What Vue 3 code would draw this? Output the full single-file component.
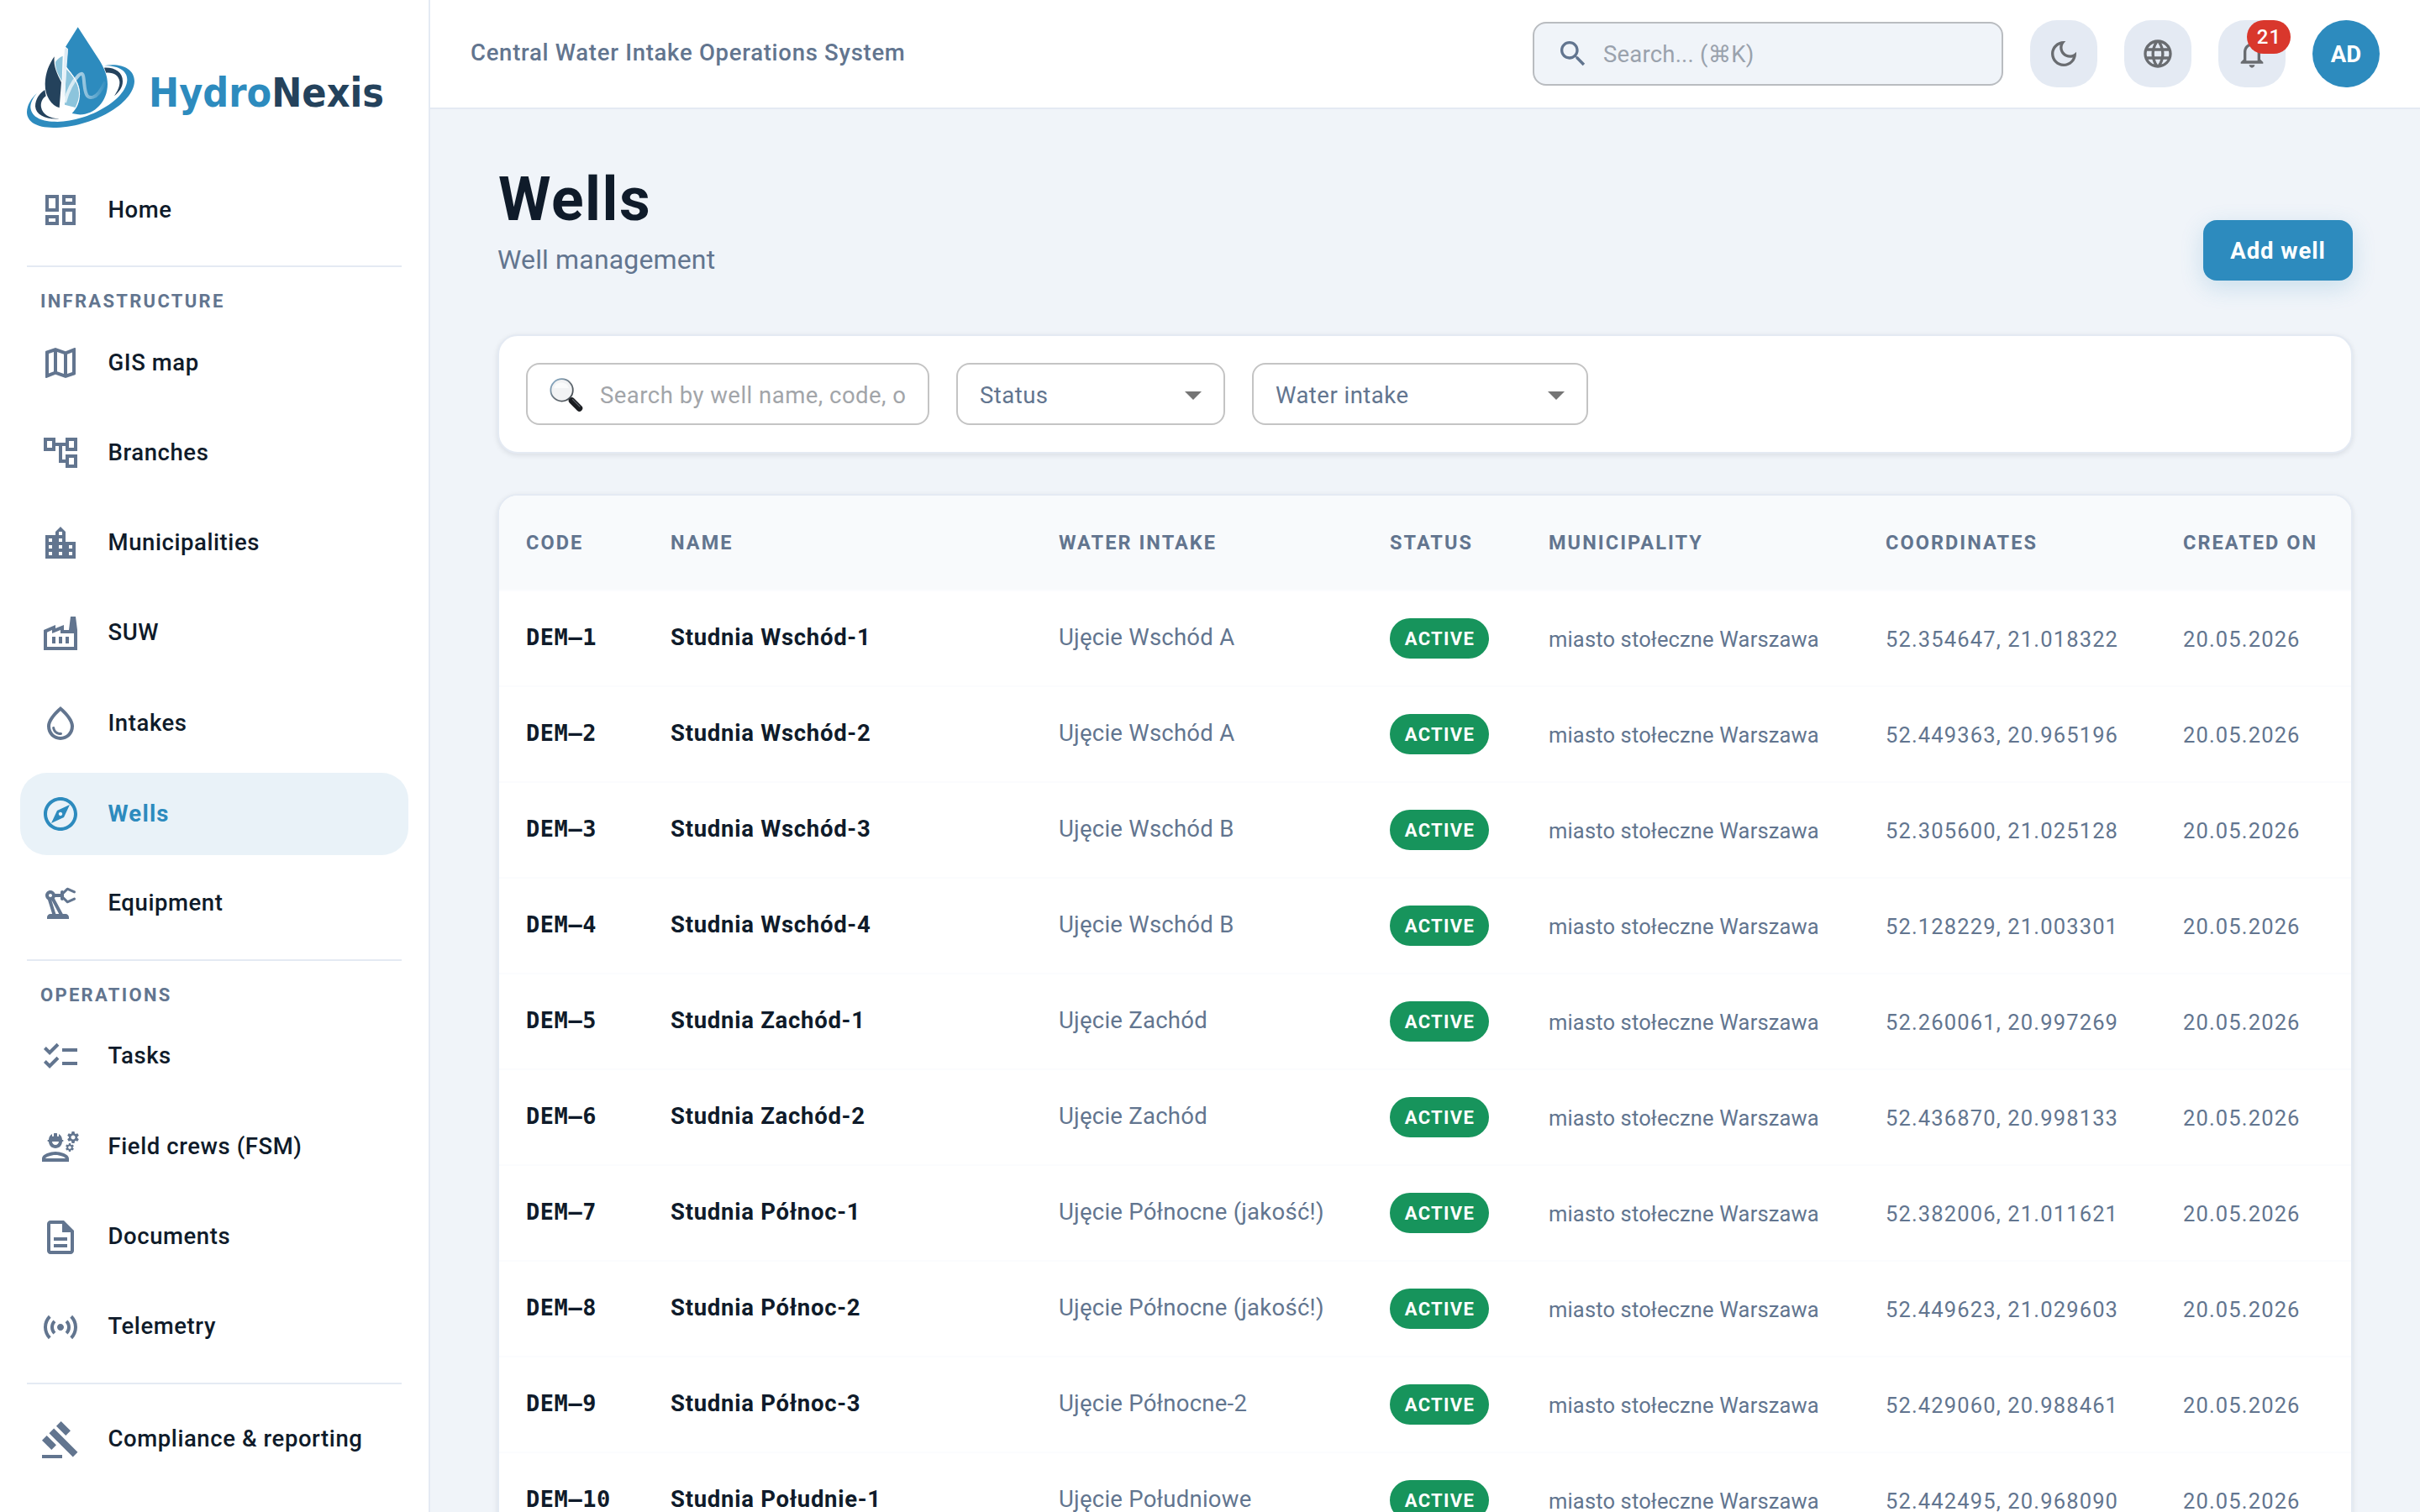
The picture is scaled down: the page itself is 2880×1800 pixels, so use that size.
<script setup>
import { ref } from 'vue'

const icons = {
  home: 'M19 5v2h-4V5h4M9 5v6H5V5h4m10 8v6h-4v-6h4M9 17v2H5v-2h4M21 3h-8v6h8V3zM11 3H3v10h8V3zm10 8h-8v10h8V11zm-10 4H3v6h8v-6z',
  map: 'm20.5 3-.16.03L15 5.1 9 3 3.36 4.9c-.21.07-.36.25-.36.48V20.5c0 .28.22.5.5.5l.16-.03L9 18.9l6 2.1 5.64-1.9c.21-.07.36-.25.36-.48V3.5c0-.28-.22-.5-.5-.5M10 5.47l4 1.4v11.66l-4-1.4zm-5 .99 3-1.01v11.7l-3 1.16zm14 11.08-3 1.01V6.86l3-1.16z',
  tree: 'M22 11V3h-7v3H9V3H2v8h7V8h2v10h4v3h7v-8h-7v3h-2V8h2v3zM7 9H4V5h3zm10 6h3v4h-3zm0-10h3v4h-3z',
  city: 'M15 11V5l-3-3-3 3v2H3v14h18V11zm-8 8H5v-2h2zm0-4H5v-2h2zm0-4H5V9h2zm6 8h-2v-2h2zm0-4h-2v-2h2zm0-4h-2V9h2zm0-4h-2V5h2zm6 12h-2v-2h2zm0-4h-2v-2h2z',
  factory: 'M22 22H2V10l7-3v2l5-2v3h3l1-8h3l1 8zM12 9.95l-5 2V10l-3 1.32V20h16v-8h-8zM11 18h2v-4h-2zm-4 0h2v-4H7zm10-4h-2v4h2z',
  drop: 'M12 2c-5.33 4.55-8 8.48-8 11.8 0 4.98 3.8 8.2 8 8.2s8-3.22 8-8.2c0-3.32-2.67-7.25-8-11.8m0 18c-3.35 0-6-2.57-6-6.2 0-2.34 1.95-5.44 6-9.14 4.05 3.7 6 6.79 6 9.14 0 3.63-2.65 6.2-6 6.2m-4.17-6c.37 0 .67.26.74.62.41 2.22 2.28 2.98 3.64 2.87.43-.02.79.32.79.75 0 .4-.32.73-.72.75-2.13.13-4.62-1.09-5.19-4.12-.08-.45.28-.87.74-.87',
  explore: 'M12 2C6.48 2 2 6.48 2 12s4.48 10 10 10 10-4.48 10-10S17.52 2 12 2m0 18c-4.41 0-8-3.59-8-8s3.59-8 8-8 8 3.59 8 8-3.59 8-8 8m-5.5-2.5 7.51-3.49L17.5 6.5 9.99 9.99zm5.5-6.6c.61 0 1.1.49 1.1 1.1s-.49 1.1-1.1 1.1-1.1-.49-1.1-1.1.49-1.1 1.1-1.1',
  arm: 'm19.93 8.35-3.6 1.68L14 7.7V6.3l2.33-2.33 3.6 1.68c.38.18.82.01 1-.36.18-.38.01-.82-.36-1l-3.92-1.83c-.38-.18-.83-.1-1.13.2L13.78 4.4c-.18-.24-.46-.4-.78-.4-.55 0-1 .45-1 1v1H8.82C8.4 4.84 7.3 4 6 4 4.34 4 3 5.34 3 7c0 1.1.6 2.05 1.48 2.58L7.08 18H6c-1.1 0-2 .9-2 2v1h13v-1c0-1.1-.9-2-2-2h-1.62L8.41 8.77c.17-.24.31-.49.41-.77H12v1c0 .55.45 1 1 1 .32 0 .6-.16.78-.4l1.74 1.74c.3.3.75.38 1.13.2l3.92-1.83c.38-.18.54-.62.36-1-.18-.37-.62-.54-1-.36M6 8c-.55 0-1-.45-1-1s.45-1 1-1 1 .45 1 1-.45 1-1 1m5.11 10H9.17l-2.46-8h.1z',
  checklist: 'M22 7h-9v2h9zm0 8h-9v2h9zM5.54 11 2 7.46l1.41-1.41 2.12 2.12 4.24-4.24 1.41 1.41zm0 8L2 15.46l1.41-1.41 2.12 2.12 4.24-4.24 1.41 1.41z',
  crew: 'M9 15c-2.67 0-8 1.34-8 4v2h16v-2c0-2.66-5.33-4-8-4m-6 4c.22-.72 3.31-2 6-2 2.7 0 5.8 1.29 6 2zM4.74 9H5c0 2.21 1.79 4 4 4s4-1.79 4-4h.26c.27 0 .49-.22.49-.49v-.02c0-.27-.22-.49-.49-.49H13c0-1.48-.81-2.75-2-3.45v.95c0 .28-.22.5-.5.5s-.5-.22-.5-.5V4.14C9.68 4.06 9.35 4 9 4s-.68.06-1 .14V5.5c0 .28-.22.5-.5.5S7 5.78 7 5.5v-.95C5.81 5.25 5 6.52 5 8h-.26c-.27 0-.49.22-.49.49v.03c0 .26.22.48.49.48M11 9c0 1.1-.9 2-2 2s-2-.9-2-2zm10.98-2.77.93-.83-.75-1.3-1.19.39c-.14-.11-.3-.2-.47-.27L20.25 3h-1.5l-.25 1.22c-.17.07-.33.16-.48.27l-1.18-.39-.75 1.3.93.83c-.02.17-.02.35 0 .52l-.93.85.75 1.3 1.2-.38c.13.1.28.18.43.25l.28 1.23h1.5l.27-1.22c.16-.07.3-.15.44-.25l1.19.38.75-1.3-.93-.85c.03-.19.02-.36.01-.53M19.5 7.75c-.69 0-1.25-.56-1.25-1.25s.56-1.25 1.25-1.25 1.25.56 1.25 1.25-.56 1.25-1.25 1.25m-.1 3.04-.85.28c-.1-.08-.21-.14-.33-.19l-.18-.88h-1.07l-.18.87c-.12.05-.24.12-.34.19l-.84-.28-.54.93.66.59c-.01.13-.01.25 0 .37l-.66.61.54.93.86-.27c.1.07.2.13.31.18l.18.88h1.07l.19-.87c.11-.05.22-.11.32-.18l.85.27.54-.93-.66-.61c.01-.13.01-.25 0-.37l.66-.59zm-1.9 2.6c-.49 0-.89-.4-.89-.89s.4-.89.89-.89.89.4.89.89-.4.89-.89.89',
  doc: 'M8 16h8v2H8zm0-4h8v2H8zm6-10H6c-1.1 0-2 .9-2 2v16c0 1.1.89 2 1.99 2H18c1.1 0 2-.9 2-2V8zm4 18H6V4h7v5h5z',
  sensors: 'M7.76 16.24C6.67 15.16 6 13.66 6 12s.67-3.16 1.76-4.24l1.42 1.42C8.45 9.9 8 10.9 8 12s.45 2.1 1.17 2.83zm8.48 0C17.33 15.16 18 13.66 18 12s-.67-3.16-1.76-4.24l-1.42 1.42C15.55 9.9 16 10.9 16 12s-.45 2.1-1.17 2.83zM12 10c-1.1 0-2 .9-2 2s.9 2 2 2 2-.9 2-2-.9-2-2-2m8 2c0 2.21-.9 4.21-2.35 5.65l1.42 1.42C20.88 17.26 22 14.76 22 12s-1.12-5.26-2.93-7.07l-1.42 1.42C19.1 7.79 20 9.79 20 12M6.35 6.35 4.93 4.93C3.12 6.74 2 9.24 2 12s1.12 5.26 2.93 7.07l1.42-1.42C4.9 16.21 4 14.21 4 12s.9-4.21 2.35-5.65',
  gavel: 'M1 21h12v2H1zM5.245 8.07l2.83-2.827 14.14 14.142-2.828 2.828zM12.317 1l5.657 5.656-2.83 2.83-5.654-5.66zM3.825 9.485l5.657 5.657-2.828 2.828-5.657-5.657z',
  search: 'M15.5 14h-.79l-.28-.27C15.41 12.59 16 11.11 16 9.5 16 5.91 13.09 3 9.5 3S3 5.91 3 9.5 5.91 16 9.5 16c1.61 0 3.09-.59 4.23-1.57l.27.28v.79l5 4.99L20.49 19zm-6 0C7.01 14 5 11.99 5 9.5S7.01 5 9.5 5 14 7.01 14 9.5 11.99 14 9.5 14',
  moon: 'M9.37 5.51c-.18.64-.27 1.31-.27 1.99 0 4.08 3.32 7.4 7.4 7.4.68 0 1.35-.09 1.99-.27C17.45 17.19 14.93 19 12 19c-3.86 0-7-3.14-7-7 0-2.93 1.81-5.45 4.37-6.49M12 3c-4.97 0-9 4.03-9 9s4.03 9 9 9 9-4.03 9-9c0-.46-.04-.92-.1-1.36-.98 1.37-2.58 2.26-4.4 2.26-2.98 0-5.4-2.42-5.4-5.4 0-1.81.89-3.42 2.26-4.4-.44-.06-.9-.1-1.36-.1',
  globe: 'M11.99 2C6.47 2 2 6.48 2 12s4.47 10 9.99 10C17.52 22 22 17.52 22 12S17.52 2 11.99 2m6.93 6h-2.95c-.32-1.25-.78-2.45-1.38-3.56 1.84.63 3.37 1.91 4.33 3.56M12 4.04c.83 1.2 1.48 2.53 1.91 3.96h-3.82c.43-1.43 1.08-2.76 1.91-3.96M4.26 14C4.1 13.36 4 12.69 4 12s.1-1.36.26-2h3.38c-.08.66-.14 1.32-.14 2s.06 1.34.14 2zm.82 2h2.95c.32 1.25.78 2.45 1.38 3.56-1.84-.63-3.37-1.9-4.33-3.56m2.95-8H5.08c.96-1.66 2.49-2.93 4.33-3.56C8.81 5.55 8.35 6.75 8.03 8M12 19.96c-.83-1.2-1.48-2.53-1.91-3.96h3.82c-.43 1.43-1.08 2.76-1.91 3.96M14.34 14H9.66c-.09-.66-.16-1.32-.16-2s.07-1.35.16-2h4.68c.09.65.16 1.32.16 2s-.07 1.34-.16 2m.25 5.56c.6-1.11 1.06-2.31 1.38-3.56h2.95c-.96 1.65-2.49 2.93-4.33 3.56M16.36 14c.08-.66.14-1.32.14-2s-.06-1.34-.14-2h3.38c.16.64.26 1.31.26 2s-.1 1.36-.26 2z',
  bell: 'M12 22c1.1 0 2-.9 2-2h-4c0 1.1.9 2 2 2m6-6v-5c0-3.07-1.63-5.64-4.5-6.32V4c0-.83-.67-1.5-1.5-1.5s-1.5.67-1.5 1.5v.68C7.64 5.36 6 7.92 6 11v5l-2 2v1h16v-1zm-2 1H8v-6c0-2.48 1.51-4.5 4-4.5s4 2.02 4 4.5z',
}

const active = ref('Wells')

const groups = [
  { items: [{ label: 'Home', icon: 'home' }] },
  {
    title: 'Infrastructure',
    items: [
      { label: 'GIS map', icon: 'map' },
      { label: 'Branches', icon: 'tree' },
      { label: 'Municipalities', icon: 'city' },
      { label: 'SUW', icon: 'factory' },
      { label: 'Intakes', icon: 'drop' },
      { label: 'Wells', icon: 'explore' },
      { label: 'Equipment', icon: 'arm' },
    ],
  },
  {
    title: 'Operations',
    items: [
      { label: 'Tasks', icon: 'checklist' },
      { label: 'Field crews (FSM)', icon: 'crew' },
      { label: 'Documents', icon: 'doc' },
      { label: 'Telemetry', icon: 'sensors' },
    ],
  },
  { items: [{ label: 'Compliance & reporting', icon: 'gavel' }] },
]

const columns = ['Code', 'Name', 'Water intake', 'Status', 'Municipality', 'Coordinates', 'Created on']

const city = 'miasto stołeczne Warszawa'
const created = '20.05.2026'
const wells = [
  { code: 'DEM–1', name: 'Studnia Wschód-1', intake: 'Ujęcie Wschód A', coords: '52.354647, 21.018322' },
  { code: 'DEM–2', name: 'Studnia Wschód-2', intake: 'Ujęcie Wschód A', coords: '52.449363, 20.965196' },
  { code: 'DEM–3', name: 'Studnia Wschód-3', intake: 'Ujęcie Wschód B', coords: '52.305600, 21.025128' },
  { code: 'DEM–4', name: 'Studnia Wschód-4', intake: 'Ujęcie Wschód B', coords: '52.128229, 21.003301' },
  { code: 'DEM–5', name: 'Studnia Zachód-1', intake: 'Ujęcie Zachód', coords: '52.260061, 20.997269' },
  { code: 'DEM–6', name: 'Studnia Zachód-2', intake: 'Ujęcie Zachód', coords: '52.436870, 20.998133' },
  { code: 'DEM–7', name: 'Studnia Północ-1', intake: 'Ujęcie Północne (jakość!)', coords: '52.382006, 21.011621' },
  { code: 'DEM–8', name: 'Studnia Północ-2', intake: 'Ujęcie Północne (jakość!)', coords: '52.449623, 21.029603' },
  { code: 'DEM–9', name: 'Studnia Północ-3', intake: 'Ujęcie Północne-2', coords: '52.429060, 20.988461' },
  { code: 'DEM–10', name: 'Studnia Południe-1', intake: 'Ujęcie Południowe', coords: '52.442495, 20.968090' },
]
</script>

<template>
  <div class="app">
    <aside class="sidebar">
      <div class="brand">
        <svg class="brand-mark" viewBox="96 96 384 360">
          <defs>
            <linearGradient id="stem" x1="0" y1="0" x2="0" y2="1">
              <stop offset="0" stop-color="#dceaf4" />
              <stop offset=".6" stop-color="#eaf3f9" />
              <stop offset="1" stop-color="#fff" />
            </linearGradient>
            <linearGradient id="wave" gradientUnits="userSpaceOnUse" x1="230" y1="0" x2="382" y2="0">
              <stop offset="0" stop-color="#fff" stop-opacity=".75" />
              <stop offset=".4" stop-color="#fff" stop-opacity=".55" />
              <stop offset=".6" stop-color="#fff" stop-opacity=".38" />
              <stop offset="1" stop-color="#fff" stop-opacity="0" />
            </linearGradient>
          </defs>
          <path fill="#2d8bbe" d="M372 235C430 224 480 245 480 290C478 370 330 455 190 456C130 456 96 435 96 400C97 375 112 350 132 333C118 348 108 368 109 385C113 420 150 435 205 435C320 432 452 355 454 285C455 252 420 233 372 235Z" />
          <path fill="#24425c" d="M372 242C410 240 438 258 438 290C438 312 425 328 408 343C420 325 428 308 427 292C425 270 405 258 379 260Z" />
          <path fill="#24425c" d="M160 321L164 343C148 354 145 370 147 383C152 408 175 422 212 424C165 428 128 410 126 380C126 355 140 334 160 321Z" />
          <path fill="#24425c" d="M194 202C191 240 203 262 219 294L212 385C185 377 160 345 161 300C162 260 175 230 194 202Z" />
          <path fill="#8cc4dc" d="M198 221C206 210 215 203 224 200L221 290C205 262 197 242 198 221ZM236 245C254 266 280 292 282 332C283 350 277 366 269 384L231 374Z" />
          <path fill="#2d8bbe" d="M278 97L355 215C372 243 384 270 384 300C384 365 335 412 280 409L257 405C275 385 285 365 285 335C283 295 262 270 236 238L243 175L234 167Z" />
          <path fill="url(#stem)" d="M231 174Q237 168 243 176L237 260L228 384L214 386L222 300Z" />
          <path fill="none" stroke="url(#wave)" stroke-width="12" d="M231 366C242 325 262 288 280 270C300 252 298 275 301 300C305 340 312 352 332 347C350 342 364 318 376 292" />
          <path fill="none" stroke="#fff" stroke-width="2.5" d="M236 240C262 272 285 297 284 338" />
        </svg>
        <span class="brand-name"><span class="brand-hydro">Hydro</span>Nexis</span>
      </div>

      <nav>
        <section v-for="(g, gi) in groups" :key="gi" class="nav-group">
          <div v-if="g.title" class="nav-title">{{ g.title }}</div>
          <a
            v-for="item in g.items"
            :key="item.label"
            class="nav-item"
            :class="{ 'is-active': item.label === active }"
            @click="active = item.label"
          >
            <svg class="nav-icon" viewBox="0 0 24 24"><path :d="icons[item.icon]" /></svg>
            <span class="nav-label">{{ item.label }}</span>
          </a>
        </section>
      </nav>
    </aside>

    <div class="page">
      <header class="topbar">
        <span class="topbar-title">Central Water Intake Operations System</span>
        <div class="topbar-search">
          <svg class="ico" viewBox="0 0 24 24"><path :d="icons.search" /></svg>
          <span>Search... (⌘K)</span>
        </div>
        <button class="icon-btn"><svg class="ico" viewBox="0 0 24 24"><path :d="icons.moon" /></svg></button>
        <button class="icon-btn"><svg class="ico" viewBox="0 0 24 24"><path :d="icons.globe" /></svg></button>
        <button class="icon-btn">
          <svg class="ico" viewBox="0 0 24 24"><path :d="icons.bell" /></svg>
          <span class="count">21</span>
        </button>
        <div class="avatar">AD</div>
      </header>

      <main class="content">
        <div class="page-head">
          <div>
            <h1 class="page-title">Wells</h1>
            <p class="page-sub">Well management</p>
          </div>
          <button class="add-btn">Add well</button>
        </div>

        <div class="card filters">
          <div class="field field-search">
            <svg class="lens" viewBox="0 0 40 40">
              <defs>
                <linearGradient id="rim" x1="0" y1="0" x2="1" y2="1">
                  <stop offset="0" stop-color="#8fb8d6" />
                  <stop offset=".5" stop-color="#6a747c" />
                  <stop offset="1" stop-color="#3a3f44" />
                </linearGradient>
              </defs>
              <path d="M22.5 23.5l3.5 3.5" stroke="#777" stroke-width="3" />
              <path d="M26.5 27l9 9" stroke="#1b1d21" stroke-width="7.5" stroke-linecap="round" />
              <path d="M27.5 25.5l8.5 8.5" stroke="#5a5e66" stroke-width="1.2" stroke-linecap="round" />
              <circle cx="14.6" cy="14.4" r="13.2" fill="#f2f3f4" stroke="url(#rim)" stroke-width="1.8" />
              <path d="M5 12a9.5 9.5 0 0 1 18 0" fill="#fafbfb" />
            </svg>
            <span class="placeholder">Search by well name, code, o</span>
          </div>
          <div class="field field-status">
            <span>Status</span>
            <svg class="caret" viewBox="0 0 24 24"><path d="m7 10 5 5 5-5z" /></svg>
          </div>
          <div class="field field-intake">
            <span>Water intake</span>
            <svg class="caret" viewBox="0 0 24 24"><path d="m7 10 5 5 5-5z" /></svg>
          </div>
        </div>

        <div class="card table-card">
          <table class="wells">
            <colgroup>
              <col class="c-code"><col class="c-name"><col class="c-intake"><col class="c-status">
              <col class="c-city"><col class="c-coords"><col class="c-date">
            </colgroup>
            <thead>
              <tr><th v-for="c in columns" :key="c">{{ c }}</th></tr>
            </thead>
            <tbody>
              <tr v-for="w in wells" :key="w.code">
                <td class="code">{{ w.code }}</td>
                <td class="name">{{ w.name }}</td>
                <td class="intake">{{ w.intake }}</td>
                <td><span class="status">Active</span></td>
                <td class="small">{{ city }}</td>
                <td class="small digits">{{ w.coords }}</td>
                <td class="small digits">{{ created }}</td>
              </tr>
            </tbody>
          </table>
        </div>
      </main>
    </div>
  </div>
</template>

<style>
body{margin:0;background:#f0f4f9}
</style>

<style scoped>
*{box-sizing:border-box}
.app{display:flex;width:2880px;height:1800px;overflow:hidden;background:#f0f4f9;color:#0f1b2a;font-family:Roboto,'DejaVu Sans',sans-serif;font-size:27.5px}
svg{display:block;flex:none;fill:currentColor}
button{border:0;padding:0;font:inherit;cursor:pointer}

.sidebar{flex:none;width:512px;height:100%;overflow:hidden;background:#fff;border-right:2px solid #e4eaf3}
.brand{display:flex;align-items:center;height:184px;padding:0 0 0 32px}
.brand-mark{width:128px;height:120px}
.brand-name{margin:35px 0 0 17px;font-family:'DejaVu Sans Condensed','DejaVu Sans',sans-serif;font-stretch:condensed;font-weight:700;font-size:48px;line-height:60px;letter-spacing:0;color:#24425c}
.brand-hydro{color:#2d8bbe}

.nav-group{padding:17px 24px 0}
.nav-group + .nav-group{margin-top:17px}
.nav-group + .nav-group::before{content:'';display:block;height:2px;margin:-17px 8px 17px;background:#e4eaf3}
.nav-title{height:48px;padding:7px 0 0 24px;font-size:22px;font-weight:700;line-height:34px;letter-spacing:2.3px;text-transform:uppercase;color:#62758f}
.nav-item{display:flex;align-items:center;height:98px;padding:0 24px;border-radius:32px;cursor:pointer}
.nav-item + .nav-item{margin-top:9.33px}
.nav-icon{width:48px;height:48px;color:#62758f}
.nav-label{margin:-2px 0 0 32.5px;font-weight:500;letter-spacing:.58px;white-space:nowrap}
.is-active{background:#e9f2f8;color:#2d8bbe}
.is-active .nav-icon{color:#2d8bbe}
.is-active .nav-label{margin-top:-1px;font-weight:700;letter-spacing:1.2px}

.page{flex:1;min-width:0;display:flex;flex-direction:column}
.topbar{flex:none;display:flex;align-items:center;gap:32px;height:130px;padding:0 48px;background:#fff;border-bottom:2px solid #e4eaf3}
.topbar-title{margin:-4px auto 0 0;font-weight:500;letter-spacing:.72px;color:#62758f}
.topbar-search{display:flex;align-items:center;gap:16px;width:560px;height:76px;padding:0 26px;border:2px solid #b9bcc0;border-radius:16px;background:#f0f4f9;color:#9aa2ad;letter-spacing:.2px}
.ico{width:40px;height:40px}
.topbar-search .ico{color:#62758f}
.icon-btn{position:relative;display:flex;align-items:center;justify-content:center;width:80px;height:80px;border-radius:32px;background:#e4eaf3;color:#696c70}
.count{position:absolute;top:0;right:-6px;width:52px;height:40px;border-radius:20px;background:#d9372c;color:#fff;font-size:24px;font-weight:500;line-height:40px;letter-spacing:1px;text-indent:1px;text-align:center}
.avatar{display:flex;align-items:center;justify-content:center;width:80px;height:80px;border-radius:50%;background:#2d8bbe;color:#fff;font-weight:700}

.content{flex:1;min-height:0;padding:65px 80px 0}
.page-head{display:flex;align-items:flex-end;justify-content:space-between;height:139px;margin-bottom:64px}
.page-title{margin:0 0 0 1px;font-size:71.5px;font-weight:700;line-height:86px;letter-spacing:1.5px}
.page-sub{margin:6px 0 3px;font-size:32px;line-height:44px;letter-spacing:.15px;color:#62758f}
.add-btn{width:178px;height:72px;border-radius:16px;background:#2d8bbe;color:#fff;font-weight:700;line-height:71px;letter-spacing:.95px;box-shadow:0 8px 28px rgba(45,139,190,.2)}

.card{border:2px solid #e4eaf3;border-radius:24px;background:#fff;box-shadow:0 2px 6px rgba(15,27,42,.1)}
.filters{display:flex;gap:32px;height:142px;padding:32px;margin-bottom:48px}
.field{display:flex;align-items:center;justify-content:space-between;height:74px;padding:2px 12px 0 26px;border:2px solid #c4c4c4;border-radius:16px;color:#62758f;letter-spacing:.48px;white-space:nowrap}
.field-search{width:480px;justify-content:flex-start;gap:20px;padding-right:26px}
.field-status{width:320px}
.field-intake{width:400px}
.placeholder{color:#a2a5a9}
.lens{width:40px;height:40px}
.caret{width:48px;height:48px;color:#757575}

.table-card{overflow:hidden}
.wells{width:100%;table-layout:fixed;border-collapse:separate;border-spacing:0}
.c-code{width:172px}
.c-name{width:462px}
.c-intake{width:394px}
.c-status{width:189px}
.c-city{width:401px}
.c-coords{width:354px}
.c-date{width:232px}
th,td{height:114px;padding:0 0 0 32px;border-bottom:2px solid #fbfcfe;text-align:left;vertical-align:middle;white-space:nowrap}
th{background:#f8fafc;font-size:23.5px;font-weight:700;letter-spacing:2.05px;text-transform:uppercase;color:#62758f}
.code{padding-bottom:3px;font-family:'DejaVu Sans Mono',monospace;font-weight:700;font-size:27px;letter-spacing:.55px}
.name{padding-bottom:3px;font-weight:700;letter-spacing:.72px}
.intake{padding-bottom:3px;letter-spacing:.25px;color:#62758f}
.small{padding-top:2px;font-size:25.5px;letter-spacing:.15px;color:#62758f}
.digits{letter-spacing:1.15px}
.status{display:block;width:118px;height:48px;border-radius:24px;background:#17945c;color:#fff;font-size:22px;font-weight:700;line-height:49px;letter-spacing:1.35px;text-indent:1px;text-align:center;text-transform:uppercase}
</style>
